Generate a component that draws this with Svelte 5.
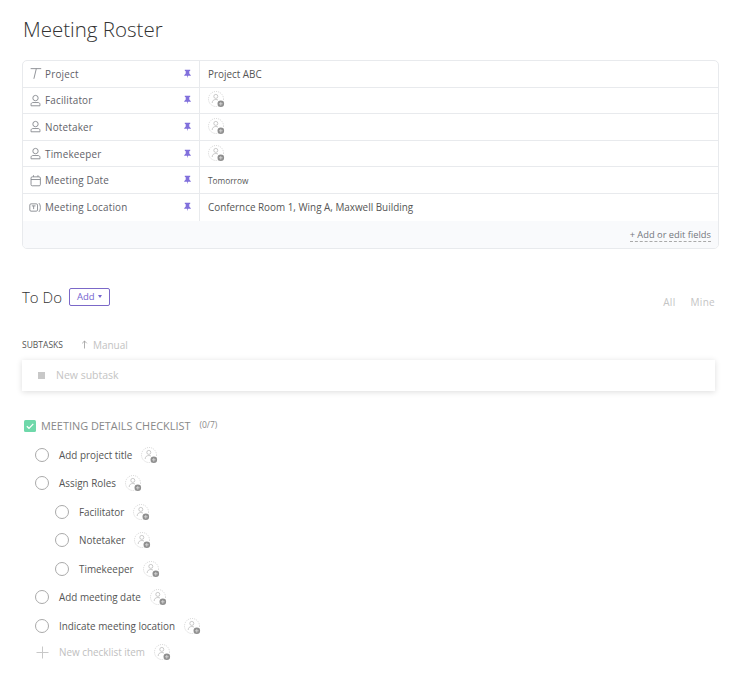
<script>
  const fields = [
    { icon: 'text', label: 'Project', value: 'Project ABC' },
    { icon: 'person', label: 'Facilitator', assign: true },
    { icon: 'person', label: 'Notetaker', assign: true },
    { icon: 'person', label: 'Timekeeper', assign: true },
    { icon: 'date', label: 'Meeting Date', value: 'Tomorrow', small: true },
    { icon: 'location', label: 'Meeting Location', value: 'Confernce Room 1, Wing A, Maxwell Building' }
  ];

  const items = [
    { label: 'Add project title' },
    { label: 'Assign Roles' },
    { label: 'Facilitator', nested: true },
    { label: 'Notetaker', nested: true },
    { label: 'Timekeeper', nested: true },
    { label: 'Add meeting date' },
    { label: 'Indicate meeting location' }
  ];
</script>

{#snippet assignee()}
  <svg class="assignee" width="18" height="18" viewBox="0 0 18 18" fill="none">
    <circle cx="8" cy="8" r="7.5" stroke="#c6c6c6" stroke-width="0.8" stroke-dasharray="1 1.2" />
    <circle cx="7.800" cy="5.400" r="2" stroke="#b4b4b4" stroke-width="0.7" />
    <path d="M4.200 12c0-2.300 1.500-3.500 3.600-3.500.9 0 1.600.2 2.200.6" stroke="#b4b4b4" stroke-width="0.7" />
    <circle cx="12.800" cy="12.800" r="3.300" fill="#8f8f8f" />
    <path d="M11 12.800h3.600M12.800 11v3.600" stroke="#ddd" stroke-width="0.8" />
  </svg>
{/snippet}

{#snippet fieldIcon(kind)}
  <svg class="field-icon" width="13" height="13" viewBox="0 0 16 16" fill="none" stroke="#85888d" stroke-width="1.100">
    {#if kind === 'text'}
      <path d="M2 2h13M9 2 6 14.500" />
    {:else if kind === 'person'}
      <circle cx="8" cy="5" r="3.300" />
      <path d="M2.500 14.500v-1.800c0-1.300 1-2.200 2.200-2.200h6.600c1.200 0 2.200.9 2.200 2.200v1.800z" />
    {:else if kind === 'date'}
      <rect x="2.500" y="3.500" width="11.500" height="11" rx="1.500" />
      <path d="M2.500 6.800h11.500M5.500 1.500v2M11 1.500v2" />
    {:else}
      <rect x="1" y="3.500" width="9.500" height="9" rx="1.500" />
      <path d="M3.500 6h4.500M5.700 6v4M12 2.500c1.300 1 2 3.200 2 5.500s-.7 4.500-2 5.500" />
    {/if}
  </svg>
{/snippet}

<main class="page">
  <h1 class="title">Meeting Roster</h1>

  <section class="fields">
    {#each fields as field}
      <div class="field">
        <div class="name">
          {@render fieldIcon(field.icon)}
          <span class="label">{field.label}</span>
          <svg class="pin" width="7" height="10" viewBox="0 0 9 11">
            <path d="M1 0h7v1.200L6.800 2v3L8.800 7v.8H5.100L4.500 11l-.6-3.200H.2V7l2-2V2L1 1.200z" fill="#8170dc" />
          </svg>
        </div>
        <div class="value" class:small={field.small}>
          {#if field.assign}
            {@render assignee()}
          {:else}
            {field.value}
          {/if}
        </div>
      </div>
    {/each}
    <div class="fields-foot">
      <span class="edit-link">+ Add or edit fields</span>
    </div>
  </section>

  <div class="todo-head">
    <div class="todo-left">
      <h2 class="todo">To Do</h2>
      <button class="add">Add <span class="caret"></span></button>
    </div>
    <div class="filters">
      <span>All</span>
      <span>Mine</span>
    </div>
  </div>

  <div class="subtasks-head">
    <span class="subtasks">SUBTASKS</span>
    <span class="manual">
      <svg width="9" height="10" viewBox="0 0 9 10" fill="none" stroke="#9a9a9a" stroke-width="0.8">
        <path d="M4.500 8.500V1M2.200 3.300 4.500 1l2.300 2.300" />
      </svg>
      Manual
    </span>
  </div>

  <div class="new-subtask">
    <span class="square"></span>
    <span class="placeholder">New subtask</span>
  </div>

  <div class="check-head">
    <svg width="12" height="12" viewBox="0 0 12 12">
      <rect width="12" height="12" rx="1.500" fill="#6fd8aa" />
      <path d="M2.800 6.200 5 8.300 9.300 3.800" fill="none" stroke="#fff" stroke-width="1.200" />
    </svg>
    <span class="check-title">MEETING DETAILS CHECKLIST</span>
    <span class="count">(0/7)</span>
  </div>

  <ul class="items">
    {#each items as item}
      <li class="item" class:nested={item.nested}>
        <span class="circle"></span>
        <span class="item-label">{item.label}</span>
        {@render assignee()}
      </li>
    {/each}
    <li class="item add-item">
      <svg class="plus" width="13" height="13" viewBox="0 0 13 13" stroke="#c8c8c8" stroke-width="1">
        <path d="M6.500 .5v12M.5 6.500h12" />
      </svg>
      <span class="item-label">New checklist item</span>
      {@render assignee()}
    </li>
  </ul>
</main>

<style>
  :global(body) {
    background: #fff;
  }

  .page {
    width: 730px;
    height: 675px;
    box-sizing: border-box;
    overflow: hidden;
    padding: 16px 11px 0 22px;
    font-family: "Open Sans", sans-serif;
    color: #444;
  }

  .title {
    margin: 0 0 18px 1px;
    font-size: 20.500px;
    line-height: 26px;
    font-weight: 300;
    color: #333;
  }

  .fields {
    border: 1px solid #e8eaed;
    border-radius: 5px;
    overflow: hidden;
  }

  .field {
    display: flex;
    height: 26.600px;
    box-sizing: border-box;
    border-bottom: 1px solid #e8eaed;
    font-size: 9.900px;
  }

  .field:nth-last-child(2) {
    border-bottom: 0;
  }

  .name {
    display: flex;
    align-items: center;
    width: 177px;
    box-sizing: border-box;
    padding: 0 8px 0 6px;
    border-right: 1px solid #e8eaed;
  }

  .field-icon {
    flex: none;
    margin-right: 3px;
  }

  .label {
    flex: 1;
    color: #5f6268;
    letter-spacing: 0.2px;
  }

  .pin {
    flex: none;
  }

  .value {
    display: flex;
    align-items: center;
    padding-left: 8px;
    color: #555;
  }

  .value.small {
    font-size: 8.300px;
  }

  .fields-foot {
    display: flex;
    justify-content: flex-end;
    align-items: flex-end;
    box-sizing: border-box;
    height: 27px;
    padding: 0 7px 6px 0;
    background: #f9fafc;
  }

  .edit-link {
    font-size: 9.300px;
    line-height: 12px;
    color: #74777d;
    border-bottom: 1px dashed #aaa;
  }

  .todo-head {
    display: flex;
    justify-content: space-between;
    align-items: flex-end;
    margin-top: 38px;
    height: 20px;
  }

  .todo-left {
    display: flex;
    align-items: center;
  }

  .todo {
    margin: 0;
    font-size: 15px;
    font-weight: 300;
    color: #333;
  }

  .add {
    display: flex;
    align-items: center;
    gap: 3px;
    height: 18px;
    margin-left: 7px;
    padding: 0 7px;
    font: 9.500px "Open Sans", sans-serif;
    color: #7565cf;
    background: #fff;
    border: 1px solid #7b68c8;
    border-radius: 2px;
  }

  .caret {
    width: 0;
    height: 0;
    border: 2.500px solid transparent;
    border-top: 3px solid #7565cf;
    border-bottom: 0;
  }

  .filters {
    display: flex;
    gap: 15px;
    padding-right: 4px;
    font-size: 10px;
    color: #c4c4c4;
    letter-spacing: 0.3px;
    transform: translateY(2px);
  }

  .subtasks-head {
    display: flex;
    align-items: center;
    gap: 17px;
    margin-top: 31px;
    height: 14px;
  }

  .subtasks {
    font-size: 8.500px;
    color: #555;
  }

  .manual {
    display: flex;
    align-items: center;
    gap: 4px;
    font-size: 10px;
    color: #c2c2c2;
  }

  .new-subtask {
    display: flex;
    align-items: center;
    height: 31px;
    width: 693px;
    margin-top: 8px;
    padding-left: 16px;
    box-sizing: border-box;
    background: #fff;
    box-shadow: 0 1px 6px rgba(0, 0, 0, 0.14);
  }

  .square {
    width: 7px;
    height: 7px;
    background: #c8c8c8;
  }

  .placeholder {
    margin-left: 11px;
    font-size: 10.500px;
    color: #c4c4c4;
  }

  .check-head {
    display: flex;
    align-items: center;
    margin-top: 27px;
    height: 16px;
    padding-left: 2px;
  }

  .check-title {
    margin-left: 5px;
    font-size: 10.900px;
    color: #888;
  }

  .count {
    margin-left: 9px;
    font-size: 8.500px;
    color: #8a8a8a;
    transform: translateY(-1px);
  }

  .items {
    list-style: none;
    margin: 7px 0 0;
    padding: 0;
  }

  .item {
    display: flex;
    align-items: center;
    height: 28.500px;
    padding-left: 13px;
    font-size: 9.900px;
    color: #555;
  }

  .item.nested {
    padding-left: 33px;
  }

  .circle {
    flex: none;
    width: 12px;
    height: 12px;
    border: 1px solid #aaa;
    border-radius: 50%;
  }

  .item-label {
    margin-left: 10px;
  }

  .assignee {
    flex: none;
  }

  .item .assignee {
    margin-left: 9px;
    transform: translateY(1px);
  }

  .add-item {
    height: 24px;
    color: #c0c0c0;
    padding-left: 14px;
  }

  .plus {
    flex: none;
  }
</style>
